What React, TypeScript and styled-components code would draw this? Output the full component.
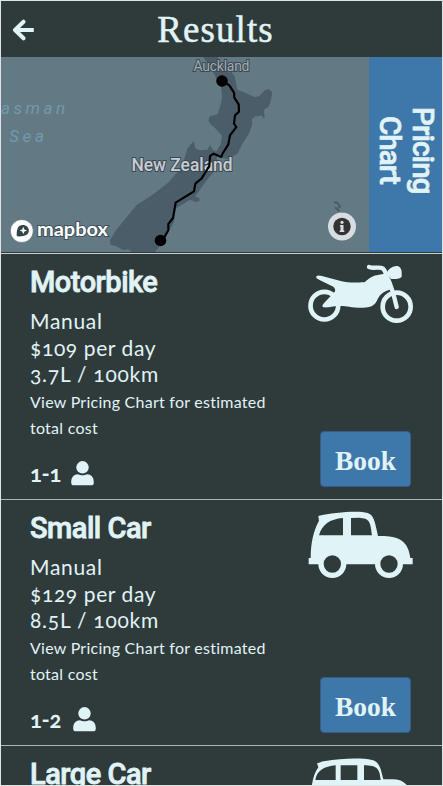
import React from 'react';
import styled, { createGlobalStyle } from 'styled-components';

const GlobalStyle = createGlobalStyle`
  * { box-sizing: border-box; }
  html, body { margin: 0; background: #dfe3e3; overflow: hidden; }
`;

const ink = '#e0f3f6';
const dark = '#2f3a3b';
const blue = '#3e77a9';

const Page = styled.div`
  width: 443px;
  height: 786px;
  padding: 1px;
  overflow: hidden;
  background: #dfe3e3;
  color: ${ink};
  font-family: Lato, 'Open Sans', sans-serif;
`;

const Screen = styled.main`
  height: 784px;
  overflow: hidden;
  background: ${dark};
`;

const Header = styled.header`
  display: grid;
  grid-template-columns: 50px 1fr 62px;
  align-items: center;
  height: 56px;
`;

const BackButton = styled.button`
  display: flex;
  padding: 2px 0 0 10px;
  border: 0;
  background: none;
  color: ${ink};
`;

const Title = styled.h1`
  margin: 0;
  text-align: center;
  font: 400 37px/55px 'Liberation Serif', serif;
  letter-spacing: 1.1px;
  -webkit-text-stroke: 0.5px ${ink};
  white-space: nowrap;
`;

const TripPanel = styled.section`
  display: flex;
  height: 197px;
  border-bottom: 1px solid #c3d2d2;
`;

const MapView = styled.div`
  width: 367.5px;
  height: 195px;
  overflow: hidden;
  svg { display: block; }
`;

const PricingTab = styled.button`
  flex: 1;
  height: 195px;
  padding: 0 0 9px 1px;
  border: 0;
  background: ${blue};
  color: ${ink};
  writing-mode: vertical-rl;
  text-align: center;
  font: 500 29.5px/33px Roboto, sans-serif;
  letter-spacing: -0.9px;
  -webkit-text-stroke: 0.7px ${ink};
`;

const Card = styled.article`
  display: flex;
  justify-content: space-between;
  height: 246px;
  padding: 0 30px 0 29px;
  border-bottom: 1px solid #a9b7b7;
`;

const Details = styled.div`
  width: 250px;
`;

const VehicleName = styled.h2`
  margin: 10px 0 8px;
  font: 500 29px/36px Roboto, sans-serif;
  letter-spacing: -0.5px;
  -webkit-text-stroke: 0.8px ${ink};
  white-space: nowrap;
`;

const Spec = styled.p<{ $track?: number }>`
  margin: 0;
  font-size: 21px;
  line-height: 26.6px;
  font-variant-numeric: oldstyle-nums;
  letter-spacing: ${p => p.$track ?? 0}px;
  white-space: nowrap;
`;

const Note = styled.p`
  margin: 1px 0 0;
  font-size: 16px;
  line-height: 26.4px;
  letter-spacing: 0.25px;
`;

const Seats = styled.div<{ $gap: number }>`
  display: flex;
  align-items: center;
  gap: ${p => p.$gap}px;
  margin-top: 18px;
  font-size: 22px;
  font-weight: 700;
  line-height: 28px;
  font-variant-numeric: oldstyle-nums;
  letter-spacing: -0.3px;
`;

const Actions = styled.div<{ $top: number }>`
  display: flex;
  flex-direction: column;
  justify-content: space-between;
  align-items: flex-end;
  padding: ${p => p.$top}px 0 12px;
  > svg { margin-right: -1px; }
`;

const BookButton = styled.button`
  width: 91px;
  height: 56px;
  margin-right: 1px;
  padding: 3px 0 0;
  border: 1px solid #365b88;
  border-radius: 4px;
  background: ${blue};
  color: ${ink};
  font: 700 27.5px/1 'Liberation Serif', serif;
`;

const ArrowIcon = () => (
  <svg width="23" height="22" viewBox="0 0 23 22" fill="none" stroke="currentColor" strokeWidth="4" strokeLinecap="round" strokeLinejoin="round">
    <path d="M12.500 2.700 4 11l8.500 8.300M4.500 11h15" />
    <path d="M19 11h1.800" strokeLinecap="square" />
  </svg>
);

const PersonIcon = () => (
  <svg width="23" height="25" viewBox="0 0 23 25" fill="currentColor">
    <circle cx="11.500" cy="6.300" r="6.200" />
    <path d="M.2 21.500C.2 16 3 13.300 7 13.300c1.500.7 2.800 1 4.500 1s3-.3 4.500-1c4 0 6.800 2.700 6.800 8.200 0 2-.9 2.800-2.500 2.800H2.700C1.100 24.300.2 23.500.2 21.500Z" />
  </svg>
);

const MotorbikeIcon = () => (
  <svg width="105" height="60" viewBox="54 40 315 180" fill={ink}>
    <g fill="none" stroke={ink} strokeLinecap="round">
      <circle cx="103" cy="168" r="41.500" strokeWidth="14" />
      <circle cx="320" cy="171" r="42" strokeWidth="14" />
      <path d="M237 52c16 6 31-2 41 4 7 4 11 20 16 32 11 24 19 54 26 84" strokeWidth="13" />
    </g>
    <path d="M79 80c5-6 17-1 28 2l45 12c23 5 43 6 70 3l-2 3c13-8 19-20 43-24l28-5 15 46-19 8c-16 7-21 18-27 30-9 15-18 18-41 19-44 0-47-6-73-5-19 0-28 5-43 4-10-1-5-8 0-14l30-31c5-6 2-12-3-17L90 92c-8-4-13-7-11-12Z" />
    <path d="M290 70c5-12 14-19 29-21 11 0 15 8 16 18v13c-3 8-14 8-20 8h-12Z" />
  </svg>
);

const CarIcon = ({ large = false }: { large?: boolean }) => (
  <svg width="105" height="68" viewBox="54 32 315 204" fill={ink}>
    <path
      fillRule="evenodd"
      d={
        large
          ? 'M81 48c10-2 10-5 25-7 45-8 110-10 140-3 23 5 27 29 34 58h28c36 0 58 22 62 75v22H57v-20h5c0-42 3-85 23-113ZM76 98h61V54c-34 3-57 16-61 44Zm76 0h50V54h-50Zm70 0h50c-3-34-11-44-50-44Z'
          : 'M85 47c44-10 119-17 148-9 18 5 22 27 31 69 50 0 89 4 97 66h7v19H56v-19h6c0-47 9-83 25-112ZM87 105h72V53c-40 3-63 20-72 52Zm96 0h63c-5-42-7-51-39-53l-24 1Z'
      }
    />
    <g fill={dark} stroke={ink} strokeWidth="16">
      <circle cx="127" cy="191" r="34" />
      <circle cx="297" cy="191" r="34" />
    </g>
  </svg>
);

const RouteMap = () => (
  <svg width="368" height="195" viewBox="1 57 368 195">
    <rect x="1" y="57" width="368" height="195" fill="#637a84" />
    <g transform="translate(100 55) scale(.33333)">
      <g fill="#4a5d68">
        <path d="M308 4 352 4 362 30 388 54 392 48 404 64 412 104 432 112 463 126 478 124 494 106 506 102 517 112 512 140 505 156 492 164 494 188 490 190 486 182 466 184 456 192 456 210 446 238 430 262 412 296 384 312 362 308 345 296 362 268 366 242 350 224 340 214 332 208 325 196 330 184 352 178 360 156 366 130 364 100 350 72 330 34Z" />
        <path d="M262 281 281 258 286 280 298 286 322 284 330 270 338 284 350 290 352 330 342 350 318 378 300 404 285 424 298 430 298 438 288 441 270 434 228 460 222 500 196 550 168 588 160 595 100 595 85 583 70 586 50 574 32 570 30 556 46 528 110 450 160 418 206 382 232 352 250 322Z" />
      </g>
      <path d="m112 466 38-24 20-12m14-12 30-18 18-14" fill="none" stroke="#566269" strokeWidth="6" opacity=".5" />
      <path d="M702 442l10 1 8 11-5 5M705 457l10 8 3 4M725 472l4 3" fill="none" stroke="#4a5d68" strokeWidth="6" />
    </g>
    <g fontFamily="Roboto, sans-serif" stroke="#3a4850" strokeWidth="2" paintOrder="stroke">
      <text x="193.500" y="71" fontSize="14" textLength="56" fill="#a3abb4">Auckland</text>
      <text x="131.500" y="171" fontSize="18.500" fontWeight="500" textLength="101" lengthAdjust="spacingAndGlyphs" fill="#c8ccd5">New Zealand</text>
    </g>
    <g fontFamily="Roboto, sans-serif" fontStyle="italic" fontSize="17" fill="#7299ab">
      <text x="1" y="114" textLength="64">asman</text>
      <text x="9" y="142" textLength="35">Sea</text>
    </g>
    <path transform="translate(100 55) scale(.33333)" d="M366 77l22 14 14 22 1 15 13 20 1 22-12 11-3 25 7 10-19 25-5 27-18 29-3 9-23-10-11 7-2 30-23 37-19 16-4 23-55 34-8 46-14 18v18l-23 42" fill="none" stroke="#000" strokeWidth="6.500" strokeLinejoin="round" />
    <circle cx="222" cy="81" r="5.800" />
    <circle cx="160.500" cy="240.500" r="5.800" />
    <circle cx="21.800" cy="231" r="11.500" fill="#fff" stroke="#465a62" strokeWidth=".6" />
    <path d="M16.800 236.300c-.5-6.600 1-11.300 6-11.300 3.800 0 6 2.700 6 5.600 0 5-5 6.100-12 5.700Z" fill="#33434a" />
    <path d="m23.300 226.700 1.100 2.700 2.700 1.100-2.700 1.100-1.100 2.700-1.100-2.700-2.700-1.100 2.700-1.100Z" fill="#fff" />
    <text x="37" y="236" fontFamily="Lato, sans-serif" fontSize="19" fontWeight="700" textLength="71" lengthAdjust="spacingAndGlyphs" fill="#fff" stroke="#40515a" strokeWidth="2" paintOrder="stroke">mapbox</text>
    <circle cx="342" cy="226.500" r="14" fill="#d8dde1" />
    <circle cx="342" cy="226.500" r="8.700" fill="#333" />
    <circle cx="342" cy="222.300" r="1.600" fill="#d8dde1" />
    <path d="M340.200 225h3.300v5.500h.8v1.600h-4.600v-1.600h.8v-3.900h-.8Z" fill="#d8dde1" />
  </svg>
);

type Vehicle = {
  name: string;
  price: number;
  fuel: string;
  seats: string;
  seatGap: number;
  iconTop: number;
  icon: React.ReactNode;
};

const vehicles: Vehicle[] = [
  { name: 'Motorbike', price: 109, fuel: '3.7', seats: '1-1', seatGap: 10, iconTop: 9, icon: <MotorbikeIcon /> },
  { name: 'Small Car', price: 129, fuel: '8.5', seats: '1-2', seatGap: 12, iconTop: 11, icon: <CarIcon /> },
  { name: 'Large Car', price: 144, fuel: '9.7', seats: '1-5', seatGap: 12, iconTop: 12, icon: <CarIcon large /> },
];

const VehicleCard = ({ name, price, fuel, seats, seatGap, icon, iconTop }: Vehicle) => (
  <Card>
    <Details>
      <VehicleName>{name}</VehicleName>
      <Spec $track={0.7}>Manual</Spec>
      <Spec $track={0.6}>${price} per day</Spec>
      <Spec $track={0.75}>{fuel}L / 100km</Spec>
      <Note>View Pricing Chart for estimated total cost</Note>
      <Seats $gap={seatGap}>
        <span>{seats}</span>
        <PersonIcon />
      </Seats>
    </Details>
    <Actions $top={iconTop}>
      {icon}
      <BookButton>Book</BookButton>
    </Actions>
  </Card>
);

export default function App() {
  return (
    <>
      <GlobalStyle />
      <Page>
        <Screen>
          <Header>
            <BackButton aria-label="Back"><ArrowIcon /></BackButton>
            <Title>Results</Title>
          </Header>
          <TripPanel>
            <MapView><RouteMap /></MapView>
            <PricingTab>Pricing<br />Chart</PricingTab>
          </TripPanel>
          {vehicles.map(v => <VehicleCard key={v.name} {...v} />)}
        </Screen>
      </Page>
    </>
  );
}
